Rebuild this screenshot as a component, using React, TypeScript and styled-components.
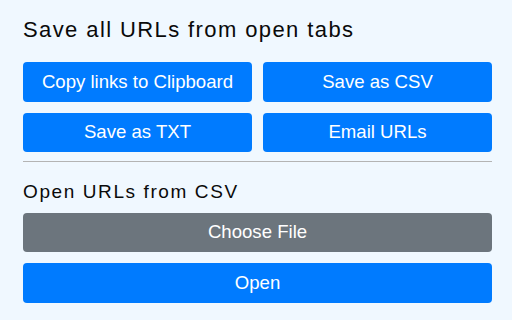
import React from 'react'
import styled, { createGlobalStyle } from 'styled-components'

const GlobalStyle = createGlobalStyle`
    html, body {
        margin: 0;
        padding: 0;
        background: #f0f8ff;
    }
    body {
        font-family: "Liberation Sans", Arial, sans-serif;
        color: #111;
    }
`

const Popup = styled.div`
    width: 512px;
    height: 320px;
    box-sizing: border-box;
    padding: 17px 20px 0 23px;
    display: flex;
    flex-direction: column;
`

const Heading = styled.h1<{ $size: number; $spacing: number }>`
    margin: 0;
    font-size: ${p => p.$size}px;
    line-height: ${p => Math.round(p.$size * 1.2)}px;
    font-weight: 400;
    letter-spacing: ${p => p.$spacing}px;
    color: #0a0a0a;
    white-space: nowrap;
`

const ButtonGrid = styled.div`
    display: grid;
    grid-template-columns: 1fr 1fr;
    grid-auto-rows: 39.5px;
    column-gap: 11px;
    row-gap: 11px;
    margin-top: 19px;
`

const Button = styled.button<{ $variant?: 'primary' | 'secondary' }>`
    display: flex;
    align-items: center;
    justify-content: center;
    height: 39.5px;
    box-sizing: border-box;
    margin: 0;
    padding: 0 12px;
    border: none;
    border-radius: 4px;
    background: ${p => (p.$variant === 'secondary' ? '#6c757d' : '#007bff')};
    color: #fff;
    font-family: "Liberation Sans", Arial, sans-serif;
    font-size: 18.6px;
    cursor: pointer;
`

const Divider = styled.hr`
    margin: 8.5px 0 18.5px;
    border: none;
    border-top: 1px solid #b4b4b4;
    height: 0;
`

const Stack = styled.div`
    display: flex;
    flex-direction: column;
    gap: 11px;
    margin-top: 9.5px;
`

const HiddenInput = styled.input`
    display: none;
`

export default function App() {
    const saveButtons = ['Copy links to Clipboard', 'Save as CSV', 'Save as TXT', 'Email URLs']
    return (
        <>
            <GlobalStyle />
            <Popup>
                <Heading $size={22} $spacing={1.4}>Save all URLs from open tabs</Heading>
                <ButtonGrid>
                    {saveButtons.map((label, index) => (
                        <Button key={index}>{label}</Button>
                    ))}
                </ButtonGrid>
                <Divider />
                <Heading as="h2" $size={19} $spacing={1.6}>Open URLs from CSV</Heading>
                <Stack>
                    <Button as="label" $variant="secondary">
                        Choose File
                        <HiddenInput type="file" accept=".csv" />
                    </Button>
                    <Button>Open</Button>
                </Stack>
            </Popup>
        </>
    )
}
